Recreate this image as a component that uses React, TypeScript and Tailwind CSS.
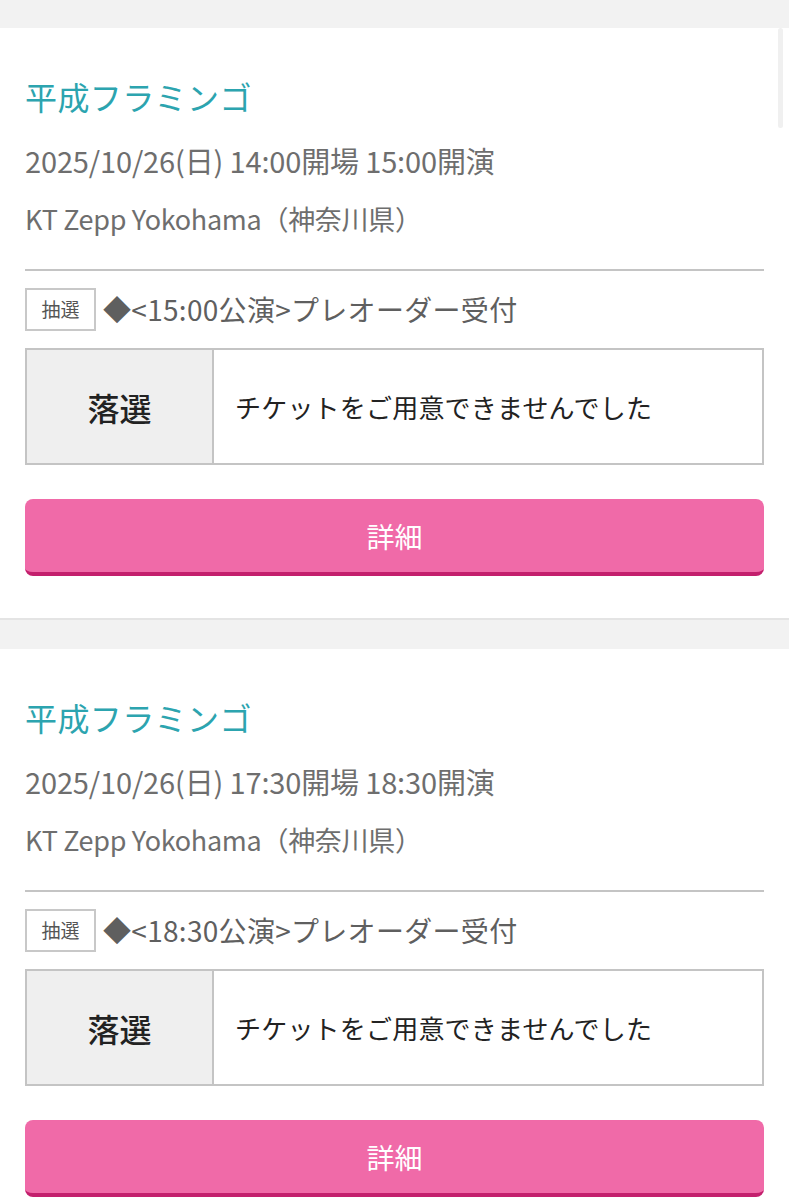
const font = "font-['Noto_Sans_CJK_JP','Noto_Sans',sans-serif]";

interface Ticket {
  title: string;
  date: string;
  venue: string;
  lotteryLabel: string;
  orderName: string;
  result: string;
  message: string;
}

const tickets: Ticket[] = [
  {
    title: '平成フラミンゴ',
    date: '2025/10/26(日) 14:00開場 15:00開演',
    venue: 'KT Zepp Yokohama（神奈川県）',
    lotteryLabel: '抽選',
    orderName: '◆<15:00公演>プレオーダー受付',
    result: '落選',
    message: 'チケットをご用意できませんでした',
  },
  {
    title: '平成フラミンゴ',
    date: '2025/10/26(日) 17:30開場 18:30開演',
    venue: 'KT Zepp Yokohama（神奈川県）',
    lotteryLabel: '抽選',
    orderName: '◆<18:30公演>プレオーダー受付',
    result: '落選',
    message: 'チケットをご用意できませんでした',
  },
];

function TicketCard({ t }: { t: Ticket }) {
  return (
    <section className="bg-white px-[25px] pt-[44px] pb-[42px]">
      <h2 className="text-[32px] leading-[48px] text-[#2ca4af] tracking-[0.4px]">{t.title}</h2>
      <p className="mt-[16px] text-[29px] leading-[48px] text-[#6e6e6e] tracking-[-0.15px]">{t.date}</p>
      <p className="mt-[11px] text-[27px] leading-[48px] text-[#6e6e6e] tracking-[-0.3px]">{t.venue}</p>

      <div className="mt-[26px] h-[2px] bg-[#c4c4c4]" />

      <div className="mt-[17px] flex items-center gap-[7px]">
        <span className="flex h-[43px] w-[71px] items-center justify-center border-2 border-[#c8c8c8] text-[19px] text-[#555]">
          {t.lotteryLabel}
        </span>
        <span className="text-[28px] leading-[43px] text-[#5f5f5f] tracking-[0.3px]">{t.orderName}</span>
      </div>

      <div className="mt-[17px] flex h-[117px] border-2 border-[#c4c4c4]">
        <div className="flex w-[187px] items-center justify-center border-r-2 border-[#c4c4c4] bg-[#efefef] text-[32px] font-medium text-[#222]">
          {t.result}
        </div>
        <div className="flex flex-1 items-center pl-[21px] text-[26px] text-[#222] tracking-[0.2px]">
          {t.message}
        </div>
      </div>

      <button className="mt-[34px] flex h-[77px] w-full items-center justify-center rounded-[8px] border-b-[4px] border-[#c31f6d] bg-[#f06aa8] text-[28px] text-white">
        詳細
      </button>
    </section>
  );
}

export default function App() {
  return (
    <div className={`relative w-[789px] h-[1200px] overflow-hidden bg-[#f2f2f2] ${font}`}>
      <div className="h-[28px]" />
      {tickets.map((t, i) => (
        <div key={i}>
          {i > 0 && <div className="h-[31px] border-t-2 border-[#e4e4e4] bg-[#f2f2f2]" />}
          <TicketCard t={t} />
        </div>
      ))}
      {/* scrollbar thumb */}
      <div className="absolute right-[6px] top-[28px] h-[100px] w-[5px] rounded-full bg-[#f0f0f0]" />
    </div>
  );
}
